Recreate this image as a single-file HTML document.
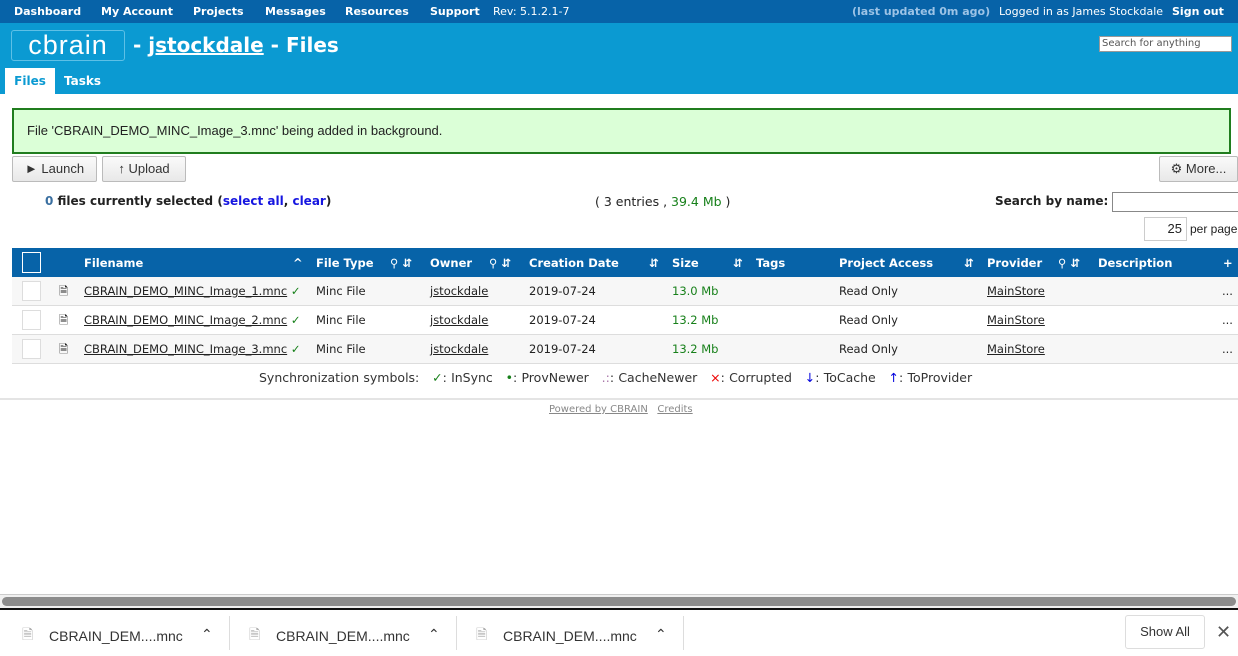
<!DOCTYPE html>
<html><head><style>
*{margin:0;padding:0;box-sizing:border-box}
body{width:1238px;height:656px;position:relative;background:#fff;font-family:"DejaVu Sans","Liberation Sans",sans-serif;font-size:12px;color:#222;overflow:hidden}
.a{position:absolute;white-space:nowrap}
.nav{top:0;left:0;width:1238px;height:23px;background:#0763a8;color:#fff;font-weight:bold;font-size:11px}
.nav span{position:absolute;top:5px}
.hdr{top:23px;left:0;width:1238px;height:71px;background:#0b9ad2}
.btn{border:1px solid #bbb;background:linear-gradient(#fafafa,#e8e8e8);border-radius:2px;font-family:"Liberation Sans",sans-serif;font-size:13px;color:#333;text-align:center;line-height:24px;height:26px}
.th{top:248px;left:12px;width:1226px;height:29px;background:#0763a8;color:#fff;font-weight:bold;font-size:11.5px}
.th span{position:absolute;top:8px}
.row{left:12px;width:1226px;height:29px;border-bottom:1px solid #ddd;font-size:11.5px}
.row span{position:absolute;top:7px}
.cb{position:absolute;left:10px;top:4px;width:19px;height:20px;border:1px solid #ddd;background:#fff}
u{text-decoration:underline}
.g{color:#17801a}
</style></head><body>
<div class="a nav">
<span style="left:14px">Dashboard</span><span style="left:101px">My Account</span><span style="left:193px">Projects</span><span style="left:265px">Messages</span><span style="left:345px">Resources</span><span style="left:430px">Support</span><span style="left:493px;font-weight:normal">Rev: 5.1.2.1-7</span>
<span style="left:852px;color:#9cc3e6">(last updated 0m ago)</span><span style="left:999px;font-weight:normal">Logged in as James Stockdale</span><span style="left:1172px">Sign out</span>
</div>
<div class="a hdr">
<div class="a" style="left:11px;top:7px;width:114px;height:31px;border:1px solid #5ec0e6;border-radius:3px;color:#fff;font-family:'Liberation Sans',sans-serif;font-size:27px;line-height:28px;text-align:center;letter-spacing:1px">cbrain</div>
<div class="a" style="left:133px;top:10px;color:#fff;font-size:20px;font-weight:bold">- <u>jstockdale</u> - Files</div>
<div class="a" style="left:1099px;top:13px;width:133px;height:16px;background:#fff;border:1px solid #999;font-size:10px;color:#555;padding-left:2px;line-height:14px">Search for anything</div>
<div class="a" style="left:5px;top:45px;width:50px;height:26px;background:#fff;color:#0b9ad2;font-weight:bold;text-align:center;line-height:26px">Files</div>
<div class="a" style="left:64px;top:51px;color:#fff;font-weight:bold">Tasks</div>
</div>
<div class="a" style="left:12px;top:108px;width:1219px;height:46px;background:#dbffd7;border:2px solid #207d1e;font-family:'Liberation Sans',sans-serif;font-size:13px;padding:13px 0 0 13px">File 'CBRAIN_DEMO_MINC_Image_3.mnc' being added in background.</div>
<div class="a btn" style="left:12px;top:156px;width:85px">&#9658; Launch</div>
<div class="a btn" style="left:102px;top:156px;width:84px">&#8593; Upload</div>
<div class="a btn" style="left:1159px;top:156px;width:79px">&#9881; More...</div>
<div class="a" style="left:45px;top:194px;font-weight:bold;font-size:12px"><span style="color:#3a6fa0">0</span> files currently selected (<span style="color:#1515e0">select all</span>, <span style="color:#1515e0">clear</span>)</div>
<div class="a" style="left:595px;top:194px;font-size:12.5px">( 3 entries , <span class="g">39.4 Mb</span> )</div>
<div class="a" style="left:995px;top:194px;font-weight:bold;font-size:12px">Search by name:</div>
<div class="a" style="left:1112px;top:192px;width:130px;height:20px;border:1px solid #888"></div>
<div class="a" style="left:1144px;top:217px;width:43px;height:24px;border:1px solid #ccc;text-align:right;padding-right:4px;line-height:22px;font-family:'Liberation Sans',sans-serif;font-size:13px">25</div>
<div class="a" style="left:1190px;top:222px;font-family:'Liberation Sans',sans-serif;font-size:12px">per page</div>
<div class="a th">
<div style="position:absolute;left:10px;top:4px;width:19px;height:21px;border:1.5px solid #fff"></div>
<span style="left:72px">Filename</span><span style="left:281px">^</span><span style="left:304px">File Type</span><span style="left:378px">&#9906; &#8693;</span>
<span style="left:418px">Owner</span><span style="left:477px">&#9906; &#8693;</span><span style="left:517px">Creation Date</span><span style="left:637px">&#8693;</span>
<span style="left:660px">Size</span><span style="left:721px">&#8693;</span><span style="left:744px">Tags</span><span style="left:827px">Project Access</span><span style="left:952px">&#8693;</span>
<span style="left:975px">Provider</span><span style="left:1046px">&#9906; &#8693;</span><span style="left:1086px">Description</span><span style="left:1211px">+</span>
</div>
<div class="a row" style="top:277px;background:#f7f7f7"><div class="cb"></div><span style="left:47px">&#128462;</span><span style="left:72px"><u>CBRAIN_DEMO_MINC_Image_1.mnc</u> <b class="g">&#10003;</b></span><span style="left:304px">Minc File</span><span style="left:418px"><u>jstockdale</u></span><span style="left:517px">2019-07-24</span><span style="left:660px" class="g">13.0 Mb</span><span style="left:827px">Read Only</span><span style="left:975px"><u>MainStore</u></span><span style="left:1210px">...</span></div>
<div class="a row" style="top:306px"><div class="cb"></div><span style="left:47px">&#128462;</span><span style="left:72px"><u>CBRAIN_DEMO_MINC_Image_2.mnc</u> <b class="g">&#10003;</b></span><span style="left:304px">Minc File</span><span style="left:418px"><u>jstockdale</u></span><span style="left:517px">2019-07-24</span><span style="left:660px" class="g">13.2 Mb</span><span style="left:827px">Read Only</span><span style="left:975px"><u>MainStore</u></span><span style="left:1210px">...</span></div>
<div class="a row" style="top:335px;background:#f7f7f7"><div class="cb"></div><span style="left:47px">&#128462;</span><span style="left:72px"><u>CBRAIN_DEMO_MINC_Image_3.mnc</u> <b class="g">&#10003;</b></span><span style="left:304px">Minc File</span><span style="left:418px"><u>jstockdale</u></span><span style="left:517px">2019-07-24</span><span style="left:660px" class="g">13.2 Mb</span><span style="left:827px">Read Only</span><span style="left:975px"><u>MainStore</u></span><span style="left:1210px">...</span></div>
<div class="a" style="left:259px;top:370px;font-size:12.5px;color:#333;word-spacing:0.3px">Synchronization symbols: &nbsp; <span class="g">&#10003;</span>: InSync &nbsp; <span class="g">&#8226;</span>: ProvNewer &nbsp; <span style="color:#a7a">.:</span>: CacheNewer &nbsp; <span style="color:#e00">&#215;</span>: Corrupted &nbsp; <span style="color:#00d">&#8595;</span>: ToCache &nbsp; <span style="color:#00d">&#8593;</span>: ToProvider</div>
<div class="a" style="left:0;top:398px;width:1238px;height:2px;background:#e4e4e4"></div>
<div class="a" style="left:549px;top:404px;font-size:10px;color:#888"><u>Powered by CBRAIN</u> &nbsp; <u>Credits</u></div>
<div class="a" style="left:0;top:594px;width:1238px;height:14px;background:#f0f0f0;border-top:1px solid #ccc"></div>
<div class="a" style="left:2px;top:597px;width:1234px;height:9px;background:#8c8c8c;border-radius:5px"></div>
<div class="a" style="left:0;top:608px;width:1238px;height:2px;background:#111"></div>
<div class="a" style="left:0;top:610px;width:1238px;height:46px;background:#fff;font-family:'Liberation Sans',sans-serif;font-size:14px;color:#333">
<span class="a" style="left:22px;top:14px;color:#aaa">&#128462;</span><span class="a" style="left:49px;top:18px">CBRAIN_DEM....mnc</span><span class="a" style="left:201px;top:16px">&#8963;</span>
<div class="a" style="left:229px;top:6px;width:1px;height:34px;background:#ddd"></div>
<span class="a" style="left:249px;top:14px;color:#aaa">&#128462;</span><span class="a" style="left:276px;top:18px">CBRAIN_DEM....mnc</span><span class="a" style="left:428px;top:16px">&#8963;</span>
<div class="a" style="left:456px;top:6px;width:1px;height:34px;background:#ddd"></div>
<span class="a" style="left:476px;top:14px;color:#aaa">&#128462;</span><span class="a" style="left:503px;top:18px">CBRAIN_DEM....mnc</span><span class="a" style="left:655px;top:16px">&#8963;</span>
<div class="a" style="left:683px;top:6px;width:1px;height:34px;background:#ddd"></div>
<div class="a" style="left:1125px;top:5px;width:80px;height:34px;border:1px solid #ddd;border-radius:3px;font-size:13px;text-align:center;line-height:32px">Show All</div>
<span class="a" style="left:1216px;top:12px;font-size:18px;color:#555">&#10005;</span>
</div>
</body></html>
